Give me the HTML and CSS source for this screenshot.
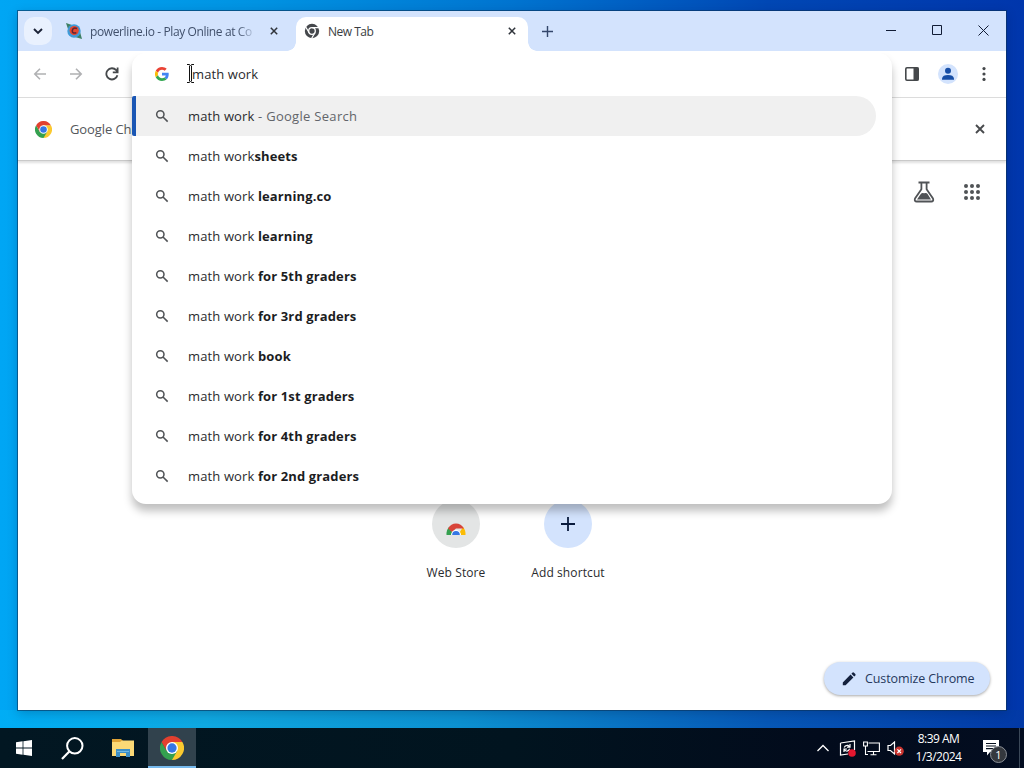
FILE: index.html
```html
<!DOCTYPE html>
<html lang="en">
<head>
    <meta charset="UTF-8">
    <meta name="viewport" content="width=device-width, initial-scale=1.0">
    <title>New Tab</title>
    <link rel="stylesheet" href="styles.css">
</head>

<body>
    <!-- shared icons -->
    <svg class="sprite">
        <symbol id="search" viewBox="0 0 24 24">
            <path fill="none" stroke="currentColor" stroke-width="2.3" d="M15 9.5a5.5 5.5 0 1 1-11 0a5.5 5.5 0 0 1 11 0ZM13.5 13.5L20.5 20.5"/>
        </symbol>
        <symbol id="close" viewBox="0 0 10 10">
            <path stroke="currentColor" stroke-width="1.9" d="M1 1L9 9M9 1L1 9"/>
        </symbol>
        <symbol id="chrome" viewBox="0 0 48 48">
            <path fill="#fbc92f" d="M24 24L24 12H44.8A24 24 0 0 1 24 48Z"/>
            <path fill="#34a04f" d="M24 24L34.4 30L24 48A24 24 0 0 1 3.2 12L13.6 30Z"/>
            <path fill="#e2402f" d="M3.2 12A24 24 0 0 1 44.8 12H24L13.6 30Z"/>
            <circle cx="24" cy="24" r="12" fill="#fff"/>
            <circle cx="24" cy="24" r="9.3" fill="#3577e5"/>
        </symbol>
        <symbol id="plus" viewBox="0 0 14 14">
            <path stroke="currentColor" stroke-width="1.8" d="M7 0V14M0 7H14"/>
        </symbol>
    </svg>

    <div class="desktop">
        <div class="window">
            <div class="tabstrip">
                <button class="tab-search">
                    <svg width="10" height="7" viewBox="0 0 10 7"><path fill="none" stroke="#1b2236" stroke-width="1.9" d="M1 1L5 5L9 1"/></svg>
                </button>
                <div class="tab">
                    <svg class="favicon" viewBox="0 0 16 16">
                        <path fill="#3c7f63" d="M0 0L6 2L2 6ZM16 16L9 14L14 9Z"/>
                        <circle cx="8" cy="8" r="6.7" fill="#3f9bd8"/>
                        <circle cx="8.2" cy="7.6" r="4.6" fill="#e5482f"/>
                        <path fill="none" stroke="#5c2536" stroke-width="1.6" d="M11 5.5Q7 4 6.3 7.6Q6 10.8 10.3 9.8"/>
                    </svg>
                    <span class="tab-title faded">powerline.io - Play Online at Co</span>
                    <svg class="tab-close"><use href="#close"/></svg>
                </div>
                <div class="tab active">
                    <svg class="favicon" viewBox="0 0 16 16">
                        <circle cx="8" cy="8" r="7.2" fill="#45484c"/>
                        <circle cx="8" cy="8" r="3.3" fill="none" stroke="#fff" stroke-width="1.3"/>
                        <path stroke="#fff" stroke-width="1.2" d="M8 4.7H15M5.1 9.7L1.6 3.8M10.9 9.7L7.4 15.7"/>
                    </svg>
                    <span class="tab-title">New Tab</span>
                    <svg class="tab-close"><use href="#close"/></svg>
                </div>
                <svg class="new-tab"><use href="#plus"/></svg>
                <div class="window-controls">
                    <span><svg width="11" height="11"><path stroke="#111c35" d="M0 5.5H10"/></svg></span>
                    <span><svg width="11" height="11"><path fill="none" stroke="#111c35" d="M.5 .5H9.5V9.5H.5Z"/></svg></span>
                    <span><svg width="11" height="11"><path stroke="#111c35" d="M.5 .5L10.5 10.5M10.5 .5L.5 10.5"/></svg></span>
                </div>
            </div>

            <div class="toolbar">
                <span class="tool muted"><svg width="14" height="14" viewBox="0 0 14 14"><path fill="none" stroke="currentColor" stroke-width="1.6" d="M13 7H1.8M7 1.8L1.8 7L7 12.2"/></svg></span>
                <span class="tool muted"><svg width="14" height="14" viewBox="0 0 14 14"><path fill="none" stroke="currentColor" stroke-width="1.6" d="M1 7H12.2M7 1.8L12.2 7L7 12.2"/></svg></span>
                <span class="tool"><svg width="14" height="14" viewBox="0 0 14 14"><path fill="none" stroke="currentColor" stroke-width="1.8" d="M12.4 8.2A5.6 5.6 0 1 1 11.2 3.2L12.4 4.6M12.6 .5V5.3H7.8"/></svg></span>
                <span class="tool push"><svg width="16" height="16" viewBox="0 0 16 16"><rect x="1.8" y="1.8" width="12.4" height="12.4" rx="1.2" fill="none" stroke="currentColor" stroke-width="1.6"/><path fill="currentColor" d="M9.5 1.5H14.5V14.5H9.5Z"/></svg></span>
                <span class="tool"><svg width="20" height="20" viewBox="0 0 20 20"><circle cx="10" cy="10" r="10" fill="#d3e3fd"/><circle cx="10" cy="6.8" r="3" fill="#174ea6"/><path fill="#174ea6" d="M4 15.8V14.4Q4.6 11 10 11Q15.4 11 16 14.4V15.8Z"/></svg></span>
                <span class="tool"><svg width="4" height="16" viewBox="0 0 4 16" fill="currentColor"><circle cx="2" cy="2.6" r="1.6"/><circle cx="2" cy="8" r="1.6"/><circle cx="2" cy="13.4" r="1.6"/></svg></span>
            </div>

            <div class="infobar">
                <svg width="17" height="17"><use href="#chrome"/></svg>
                <span class="infobar-text">Google Chrome</span>
                <svg class="infobar-close"><use href="#close"/></svg>
            </div>

            <div class="page">
                <div class="page-top">
                    <svg width="22" height="22" viewBox="0 0 22 22">
                        <path fill="none" stroke="#505356" stroke-width="1.8" stroke-linejoin="round" d="M5.5 1.5H16.5M8.4 2V8.3L2 17.5Q1 20.5 3.8 20.5H18.2Q21 20.5 20 17.5L13.6 8.3V2"/>
                        <path fill="#505356" d="M4 18.6L7.6 13.2Q9 11.5 11 12.3Q13.5 11.3 14.6 13L18 18.6Z"/>
                    </svg>
                    <svg width="16" height="16" viewBox="0 0 16 16" fill="#505356">
                        <circle cx="2" cy="2" r="2"/><circle cx="8" cy="2" r="2"/><circle cx="14" cy="2" r="2"/>
                        <circle cx="2" cy="8" r="2"/><circle cx="8" cy="8" r="2"/><circle cx="14" cy="8" r="2"/>
                        <circle cx="2" cy="14" r="2"/><circle cx="8" cy="14" r="2"/><circle cx="14" cy="14" r="2"/>
                    </svg>
                </div>
                <div class="shortcuts">
                    <div class="shortcut">
                        <div class="tile store">
                            <svg width="20" height="12" viewBox="0 0 20 12">
                                <path fill="#34a04f" d="M.5 12Q.2 7 3 4L8 12Z"/>
                                <path fill="#fbbc04" d="M19.5 12Q19.8 7 17 4L12 12Z"/>
                                <path fill="#d8443a" d="M2 5.5Q5 .5 10 .5Q15 .5 18 5.5H10L6 9Z"/>
                                <path fill="#fff" d="M5 12A5 5 0 0 1 15 12Z"/>
                                <path fill="#3577e5" d="M6.2 12A3.8 4 0 0 1 13.8 12Z"/>
                            </svg>
                        </div>
                        <span>Web Store</span>
                    </div>
                    <div class="shortcut">
                        <div class="tile add"><svg width="14" height="14"><use href="#plus"/></svg></div>
                        <span>Add shortcut</span>
                    </div>
                </div>
                <button class="customize">
                    <svg width="14" height="14" viewBox="0 0 14 14" fill="#14213d"><path d="M.8 13.2V10.4L8.6 2.6L11.4 5.4L3.6 13.2ZM9.4 1.8L10.6 .6Q11.3 .1 12 .7L13.3 2Q13.9 2.7 13.4 3.4L12.2 4.6Z"/></svg>
                    <span>Customize Chrome</span>
                </button>
            </div>

            <!-- omnibox popup, lies over the toolbar and the page -->
            <div class="omnibox">
                <div class="omnibox-input">
                    <svg class="google" viewBox="0 0 48 48">
                        <path fill="#ea4335" d="M24 9.5c3.54 0 6.71 1.22 9.21 3.6l6.85-6.85C35.9 2.38 30.47 0 24 0 14.62 0 6.51 5.38 2.56 13.22l7.98 6.19C12.43 13.72 17.74 9.5 24 9.5z"/>
                        <path fill="#4285f4" d="M46.98 24.55c0-1.57-.15-3.09-.38-4.55H24v9.02h12.94c-.58 2.96-2.26 5.48-4.78 7.18l7.73 6c4.51-4.18 7.09-10.36 7.09-17.65z"/>
                        <path fill="#fbbc05" d="M10.53 28.59A14.5 14.5 0 0 1 10.53 19.41l-7.98-6.19a24 24 0 0 0 0 21.56l7.98-6.19z"/>
                        <path fill="#34a853" d="M24 48c6.48 0 11.93-2.13 15.89-5.81l-7.73-6c-2.15 1.45-4.92 2.3-8.16 2.3-6.26 0-11.57-4.22-13.47-9.91l-7.98 6.19C6.51 42.62 14.62 48 24 48z"/>
                    </svg>
                    <span class="query">math work</span>
                    <svg class="ibeam" viewBox="0 0 7 19"><path fill="none" stroke="#fff" stroke-width="3" d="M3.5 1V18"/><path fill="none" stroke="#111" d="M0 .5H2.5L3.5 1.5L4.5 .5H7M0 18.5H2.5L3.5 17.5L4.5 18.5H7M2.5 1.5V17.5M4.5 1.5V17.5"/></svg>
                </div>
                <ul class="suggestions">
                    <li class="selected"><svg><use href="#search"/></svg><span>math work <i>- Google Search</i></span></li>
                    <li><svg><use href="#search"/></svg><span>math work<b>sheets</b></span></li>
                    <li><svg><use href="#search"/></svg><span>math work <b>learning.co</b></span></li>
                    <li><svg><use href="#search"/></svg><span>math work <b>learning</b></span></li>
                    <li><svg><use href="#search"/></svg><span>math work <b>for 5th graders</b></span></li>
                    <li><svg><use href="#search"/></svg><span>math work <b>for 3rd graders</b></span></li>
                    <li><svg><use href="#search"/></svg><span>math work <b>book</b></span></li>
                    <li><svg><use href="#search"/></svg><span>math work <b>for 1st graders</b></span></li>
                    <li><svg><use href="#search"/></svg><span>math work <b>for 4th graders</b></span></li>
                    <li><svg><use href="#search"/></svg><span>math work <b>for 2nd graders</b></span></li>
                </ul>
            </div>
        </div>
    </div>

    <div class="taskbar">
        <div class="task"><svg width="16" height="16" viewBox="0 0 16 16" fill="#fff"><path d="M0 2.2L6.6 1.3V7.6H0ZM7.4 1.2L16 0V7.6H7.4ZM0 8.4H6.6V14.7L0 13.8ZM7.4 8.4H16V16L7.4 14.8Z"/></svg></div>
        <div class="task"><svg width="23" height="23" viewBox="0 0 23 23"><circle cx="13.8" cy="8.8" r="7.7" fill="none" stroke="#fff" stroke-width="2"/><path stroke="#fff" stroke-width="2.2" d="M8.3 14.5L1 22"/></svg></div>
        <div class="task files">
            <svg width="22" height="18" viewBox="0 0 22 18">
                <path fill="#dfa336" d="M0 0H9L11 2H21V8H0Z"/>
                <path fill="#fbd976" d="M0 3H8L10 1.5H22V17H0Z"/>
                <path fill="#3d8fc6" d="M4 10H18V18H14V14H8V18H4Z"/>
                <path fill="#70b9e4" d="M5 12H17V13H5Z"/>
            </svg>
        </div>
        <div class="task running"><svg width="24" height="24"><use href="#chrome"/></svg></div>
        <div class="tray">
            <span><svg width="12" height="8" viewBox="0 0 12 8"><path fill="none" stroke="#fff" stroke-width="1.3" d="M.5 7L6 1.5L11.5 7"/></svg></span>
            <span>
                <svg width="17" height="17" viewBox="0 0 17 17">
                    <path fill="none" stroke="#fff" stroke-width="1.2" d="M1.5 3L15.5 1V10M9 14L1.5 15V3M5.2 7.5Q6 5 9 5.4L10.6 6.8M11 4V7.2H8M10.6 8.8Q9.5 11.8 6.6 10.8L5.3 9.5M5 12V9H8"/>
                    <circle cx="13" cy="13" r="3.8" fill="#e3172f"/>
                </svg>
            </span>
            <span>
                <svg width="17" height="15" viewBox="0 0 17 15">
                    <path fill="none" stroke="#fff" stroke-width="1.1" d="M5.5 2H16.4V10.5H4.5M10.5 10.5V13.5M7.5 13.7H13.5M.6 1H4.4V5H.6ZM2.5 5V13.5H5"/>
                </svg>
            </span>
            <span>
                <svg width="17" height="15" viewBox="0 0 17 15">
                    <path fill="none" stroke="#fff" stroke-width="1.2" d="M1 4.5H3.5L7.5 1V13L3.5 9.5H1Z"/>
                    <circle cx="12.2" cy="10.2" r="4.6" fill="#c8342f"/>
                    <path stroke="#fff" stroke-width="1.2" d="M10.4 8.4L14 12M14 8.4L10.4 12"/>
                </svg>
            </span>
        </div>
        <div class="clock"><div>8:39 AM</div><div>1/3/2024</div></div>
        <div class="notifications">
            <svg width="16" height="16" viewBox="0 0 16 16"><path fill="#fff" d="M0 0H16V12H7L4 15.5V12H0Z"/><path stroke="#06101f" stroke-width="1.2" d="M3 3.5H13M3 6H13M3 8.6H10"/></svg>
            <span class="count">1</span>
        </div>
    </div>
</body>

</html>
```
FILE: styles.css
```css
* {
    box-sizing: border-box;
}

body {
    margin: 0;
    height: 768px;
    display: flex;
    flex-direction: column;
    overflow: hidden;
    font-family: "Open Sans", "Noto Sans", sans-serif;
    font-size: 13px;
    color: #2a2b2e;
}

button {
    border: 0;
    padding: 0;
    font: inherit;
}

svg {
    display: block;
    flex: none;
}

.sprite {
    position: absolute;
    width: 0;
    height: 0;
}

.desktop {
    height: 728px;
    padding: 11px 18px 18px;
    background:
        linear-gradient(90deg, #00adf5 0%, #0fa8e0 20%, #0c90d0 45%, #0657b6 75%, #0239a6 100%) bottom / 100% 18px no-repeat,
        linear-gradient(90deg, #00a6f4 0%, #0093e2 25%, #0074d0 50%, #0047b4 75%, #0036ac 100%);
}

.window {
    position: relative;
    height: 699px;
    display: flex;
    flex-direction: column;
    background: #fff;
    box-shadow: 0 0 0 1px rgba(10, 50, 90, .6), 0 3px 10px rgba(0, 20, 60, .25);
}

/* tabs */

.tabstrip {
    height: 40px;
    flex: none;
    display: flex;
    padding-left: 6px;
    background: #d3e3fd;
}

.tab-search {
    width: 28px;
    height: 28px;
    margin-top: 6px;
    border-radius: 10px;
    background: #e9f1fe;
    display: flex;
    align-items: center;
    justify-content: center;
}

.tab {
    display: flex;
    align-items: center;
    width: 233px;
    padding: 0 7px 0 14px;
    color: #41506b;
    font-size: 12px;
}

.tab.active {
    position: relative;
    width: 232px;
    height: 34px;
    margin: 6px 0 0 11px;
    padding: 0 12px 6px 8px;
    border-radius: 10px 10px 0 0;
    background: #fff;
    color: #3a3d41;
}

/* curved feet of the active tab */
.tab.active::before,
.tab.active::after {
    content: "";
    position: absolute;
    bottom: 0;
    width: 9px;
    height: 9px;
}

.tab.active::before {
    left: -9px;
    background: radial-gradient(circle at 0 0, transparent 8.5px, #fff 9px);
}

.tab.active::after {
    right: -9px;
    background: radial-gradient(circle at 100% 0, transparent 8.5px, #fff 9px);
}

.favicon {
    width: 16px;
    height: 16px;
    margin-right: 8px;
}

.tab-title {
    flex: 1;
    letter-spacing: -.5px;
    white-space: nowrap;
}

.tab-title.faded {
    margin-right: 13px;
    letter-spacing: -.38px;
    -webkit-mask-image: linear-gradient(90deg, #000 88%, transparent);
    mask-image: linear-gradient(90deg, #000 88%, transparent);
}

.tab-close {
    width: 8px;
    height: 8px;
    color: #30343b;
}

.new-tab {
    width: 11px;
    height: 11px;
    margin: 15px 0 0 14px;
    color: #33466b;
}

.window-controls {
    display: flex;
    margin-left: auto;
}

.window-controls span {
    width: 46px;
    height: 38px;
    display: flex;
    align-items: center;
    justify-content: center;
}

/* toolbar */

.toolbar {
    height: 47px;
    flex: none;
    display: flex;
    align-items: center;
    padding: 0 4px;
    border-bottom: 1px solid #dcdcdc;
    background: #fff;
    color: #45484b;
}

.tool {
    width: 36px;
    display: flex;
    justify-content: center;
}

.tool.muted {
    color: #b0b1b3;
}

.push {
    margin-left: auto;
}

.infobar {
    height: 63px;
    flex: none;
    display: flex;
    align-items: center;
    padding: 0 21px 0 17px;
    border-bottom: 1px solid #c9c9c9;
    box-shadow: 0 2px 2px rgba(0, 0, 0, .12);
    color: #54575b;
}

.infobar-text {
    margin-left: 18px;
    letter-spacing: -.1px;
}

.infobar-close {
    width: 10px;
    height: 10px;
    margin-left: auto;
    color: #484a4d;
}

/* new tab page */

.page {
    flex: 1;
    display: flex;
    flex-direction: column;
}

.page-top {
    display: flex;
    justify-content: flex-end;
    align-items: center;
    gap: 29px;
    padding: 20px 26px 0 0;
}

.shortcuts {
    display: flex;
    justify-content: center;
    margin-top: 297px;
}

.shortcut {
    width: 112px;
    display: flex;
    flex-direction: column;
    align-items: center;
    gap: 16px;
    font-size: 12px;
    line-height: 18px;
    letter-spacing: .1px;
}

.tile {
    width: 48px;
    height: 48px;
    border-radius: 50%;
    display: flex;
    align-items: center;
    justify-content: center;
}

.tile.store {
    padding-top: 10px;
    background: #e3e5e5;
}

.tile.add {
    background: #d3e3fd;
    color: #0a1b3d;
}

.customize {
    display: flex;
    align-items: center;
    align-self: flex-end;
    gap: 9px;
    width: 166px;
    height: 33px;
    margin: auto 16px 15px 0;
    padding-left: 18px;
    border-radius: 17px;
    background: #d3e3fd;
    box-shadow: 0 1px 3px rgba(0, 0, 0, .35);
    color: #26395d;
    font-size: 12.5px;
    letter-spacing: -.1px;
    white-space: nowrap;
}

/* omnibox */

.omnibox {
    position: absolute;
    left: 114px;
    top: 42px;
    width: 760px;
    height: 451px;
    border-radius: 14px;
    background: #fff;
    box-shadow: 0 7px 8px rgba(0, 0, 0, .25);
    clip-path: inset(0 -14px -24px);
}

.omnibox-input {
    position: relative;
    height: 43px;
    display: flex;
    align-items: center;
    padding: 0 0 2px 23px;
}

.google {
    width: 14px;
    height: 14px;
}

.query {
    margin-left: 23px;
    letter-spacing: .1px;
}

.ibeam {
    position: absolute;
    left: 55px;
    top: 11px;
    width: 7px;
    height: 19px;
}

.suggestions {
    margin: 0;
    padding: 0;
    list-style: none;
}

.suggestions li {
    height: 40px;
    width: 744px;
    display: flex;
    align-items: center;
    padding-left: 22px;
    letter-spacing: .13px;
}

.suggestions svg {
    width: 16px;
    height: 16px;
    margin-right: 18px;
    color: #505356;
}

.suggestions i {
    font-style: normal;
    letter-spacing: .3px;
    color: #62656a;
}

.suggestions b {
    letter-spacing: .12px;
    color: #1c1d1f;
}

.suggestions .selected {
    border-left: 4px solid #1a56b4;
    border-radius: 2px 20px 20px 2px;
    padding-left: 18px;
    background: #f0f0f0;
}

/* taskbar */

.taskbar {
    height: 40px;
    display: flex;
    background: linear-gradient(90deg, #021722, #01141f 50%, #020b1c 80%, #030d20);
    color: #fff;
}

.task {
    width: 48px;
    display: flex;
    align-items: center;
    justify-content: center;
}

.task.files {
    width: 52px;
    padding-left: 2px;
}

.task.running {
    background: #31424d;
    border-top: 2px solid #31424d;
    border-bottom: 2px solid #76b9ed;
}

.tray {
    display: flex;
    margin-left: auto;
}

.tray span {
    width: 24px;
    display: flex;
    align-items: center;
    justify-content: center;
}

.clock {
    width: 63px;
    padding-top: 2px;
    font-size: 12px;
    line-height: 18px;
    letter-spacing: -.5px;
    text-align: center;
}

.notifications {
    position: relative;
    width: 50px;
    padding: 12px 0 0 13px;
    margin-right: 4px;
    border-right: 1px solid #3b4858;
}

.count {
    position: absolute;
    left: 20px;
    top: 18px;
    width: 17px;
    height: 17px;
    border: 1px solid #8b9097;
    border-radius: 50%;
    background: #34383e;
    font-size: 11px;
    line-height: 15px;
    text-align: center;
}
```
